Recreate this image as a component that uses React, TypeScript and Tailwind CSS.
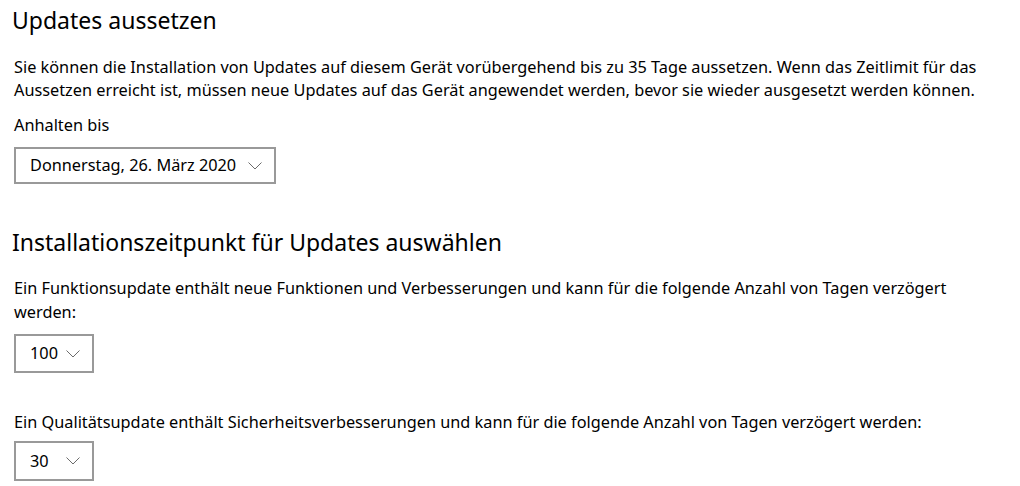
const Chevron = () => (
  <svg width="14" height="8" viewBox="0 0 14 8" fill="none" className="shrink-0">
    <path d="M0.5 0.5 L7 7 L13.5 0.5" stroke="#6b6b6b" strokeWidth="1" />
  </svg>
);

function Dropdown({ value, width, height }: { value: string; width: string; height: string }) {
  return (
    <div
      className={`${width} ${height} border-2 border-[#999999] bg-white flex items-center justify-between pl-[14px] pr-[12px] text-[16.3px] text-black`}
    >
      <span>{value}</span>
      <Chevron />
    </div>
  );
}

export default function App() {
  return (
    <div
      className="w-[1020px] h-[486px] bg-white text-black overflow-hidden pl-[14px] pt-[5px]"
      style={{ fontFamily: '"Noto Sans", "Open Sans", sans-serif' }}
    >
      <h1 className="text-[23px] leading-[30px] -ml-[2px]">Updates aussetzen</h1>
      <p className="mt-[21px] text-[16.3px] leading-[23px] whitespace-nowrap">
        Sie können die Installation von Updates auf diesem Gerät vorübergehend bis zu 35 Tage aussetzen. Wenn das Zeitlimit für das
        <br />
        Aussetzen erreicht ist, müssen neue Updates auf das Gerät angewendet werden, bevor sie wieder ausgesetzt werden können.
      </p>
      <div className="mt-[12px] text-[16.3px] leading-[23px]">Anhalten bis</div>
      <div className="mt-[10px]">
        <Dropdown value="Donnerstag, 26. März 2020" width="w-[262px]" height="h-[37px]" />
      </div>

      <h2 className="mt-[43px] text-[23px] leading-[30px] -ml-[2px]">
        Installationszeitpunkt für Updates auswählen
      </h2>
      <p className="mt-[19px] text-[16.3px] leading-[24px] whitespace-nowrap">
        Ein Funktionsupdate enthält neue Funktionen und Verbesserungen und kann für die folgende Anzahl von Tagen verzögert
        <br />
        werden:
      </p>
      <div className="mt-[10px]">
        <Dropdown value="100" width="w-[80px]" height="h-[39px]" />
      </div>
      <p className="mt-[37px] text-[16.3px] leading-[24px] whitespace-nowrap">
        Ein Qualitätsupdate enthält Sicherheitsverbesserungen und kann für die folgende Anzahl von Tagen verzögert werden:
      </p>
      <div className="mt-[7px]">
        <Dropdown value="30" width="w-[80px]" height="h-[40px]" />
      </div>
    </div>
  );
}
